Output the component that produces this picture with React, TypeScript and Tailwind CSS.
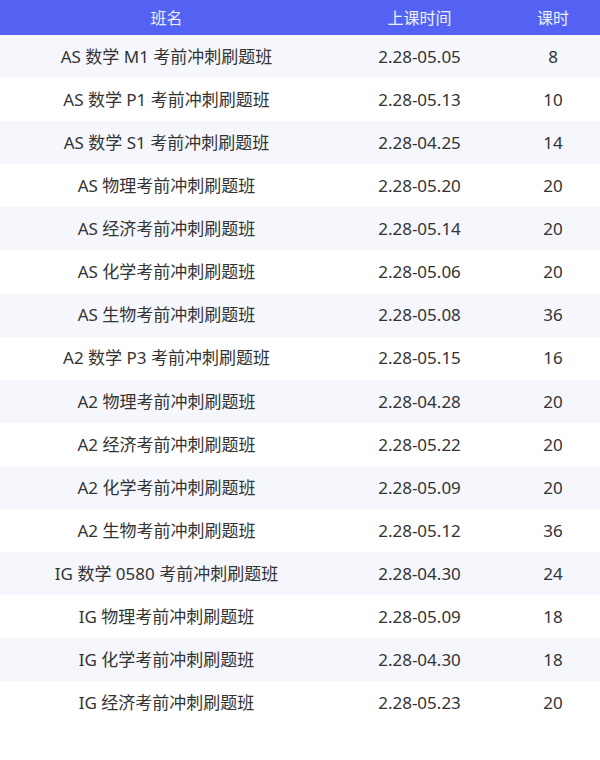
const rows: [string, string, string][] = [
  ['AS 数学 M1 考前冲刺刷题班', '2.28-05.05', '8'],
  ['AS 数学 P1 考前冲刺刷题班', '2.28-05.13', '10'],
  ['AS 数学 S1 考前冲刺刷题班', '2.28-04.25', '14'],
  ['AS 物理考前冲刺刷题班', '2.28-05.20', '20'],
  ['AS 经济考前冲刺刷题班', '2.28-05.14', '20'],
  ['AS 化学考前冲刺刷题班', '2.28-05.06', '20'],
  ['AS 生物考前冲刺刷题班', '2.28-05.08', '36'],
  ['A2 数学 P3 考前冲刺刷题班', '2.28-05.15', '16'],
  ['A2 物理考前冲刺刷题班', '2.28-04.28', '20'],
  ['A2 经济考前冲刺刷题班', '2.28-05.22', '20'],
  ['A2 化学考前冲刺刷题班', '2.28-05.09', '20'],
  ['A2 生物考前冲刺刷题班', '2.28-05.12', '36'],
  ['IG 数学 0580 考前冲刺刷题班', '2.28-04.30', '24'],
  ['IG 物理考前冲刺刷题班', '2.28-05.09', '18'],
  ['IG 化学考前冲刺刷题班', '2.28-04.30', '18'],
  ['IG 经济考前冲刺刷题班', '2.28-05.23', '20'],
];

const App = () => {
  return (
    <div
      className="w-[600px] h-[760px] bg-white text-[#333333]"
      style={{ fontFamily: '"Noto Sans", "Noto Sans CJK SC", sans-serif' }}
    >
      <div className="grid grid-cols-[333px_173px_94px] h-[35px] items-center bg-[#5362f2] text-[16px] text-white/90">
        <div className="text-center">班名</div>
        <div className="text-center">上课时间</div>
        <div className="text-center">课时</div>
      </div>
      {rows.map(([name, time, hours], i) => (
        <div
          key={name}
          className={`grid grid-cols-[333px_173px_94px] h-[43.1px] items-center text-[17px] ${
            i % 2 === 0 ? 'bg-[#f5f7fd]' : 'bg-white'
          }`}
        >
          <div className="text-center">{name}</div>
          <div className="text-center">{time}</div>
          <div className="text-center">{hours}</div>
        </div>
      ))}
    </div>
  );
};

export default App;
